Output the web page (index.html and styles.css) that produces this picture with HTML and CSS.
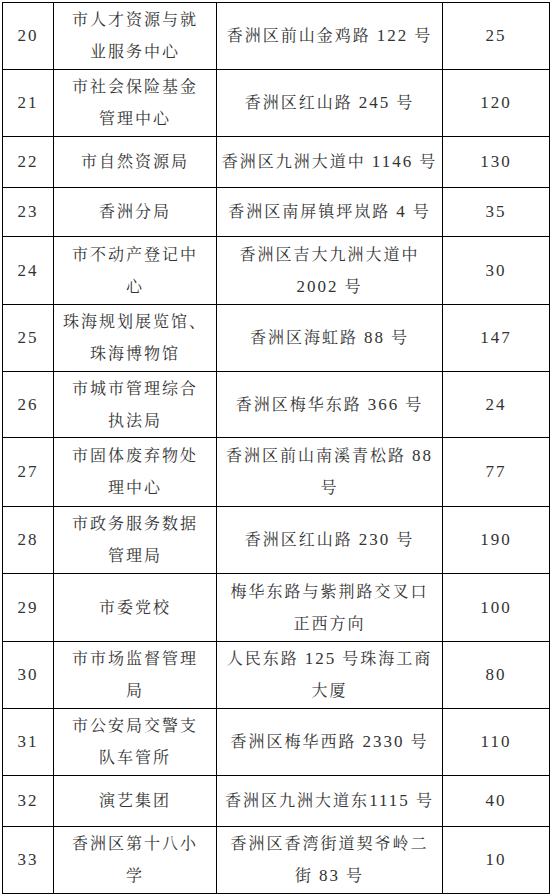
FILE: index.html
```html
<!DOCTYPE html>
<html lang="zh-CN">
<head>
<meta charset="utf-8">
<link rel="stylesheet" href="styles.css">
</head>
<body class="page">
<table class="grid">
  <colgroup>
    <col class="c-no">
    <col class="c-name">
    <col class="c-addr">
    <col class="c-num">
  </colgroup>
  <tbody>
    <tr class="tall"><td class="num">20</td><td class="txt">市人才资源与就<br>业服务中心</td><td class="txt">香洲区前山金鸡路 <span class="n">122</span> 号</td><td class="num">25</td></tr>
    <tr class="tall"><td class="num">21</td><td class="txt">市社会保险基金<br>管理中心</td><td class="txt">香洲区红山路 <span class="n">245</span> 号</td><td class="num">120</td></tr>
    <tr class="short"><td class="num">22</td><td class="txt">市自然资源局</td><td class="txt">香洲区九洲大道中 <span class="n">1146</span> 号</td><td class="num">130</td></tr>
    <tr class="short2"><td class="num">23</td><td class="txt">香洲分局</td><td class="txt">香洲区南屏镇坪岚路 <span class="n">4</span> 号</td><td class="num">35</td></tr>
    <tr class="tall2"><td class="num">24</td><td class="txt">市不动产登记中<br>心</td><td class="txt">香洲区吉大九洲大道中<br><span class="n">2002</span> 号</td><td class="num">30</td></tr>
    <tr class="tall"><td class="num">25</td><td class="txt">珠海规划展览馆、<br>珠海博物馆</td><td class="txt">香洲区海虹路 <span class="n">88</span> 号</td><td class="num">147</td></tr>
    <tr class="tall3"><td class="num">26</td><td class="txt">市城市管理综合<br>执法局</td><td class="txt">香洲区梅华东路 <span class="n">366</span> 号</td><td class="num">24</td></tr>
    <tr class="tall4"><td class="num">27</td><td class="txt">市固体废弃物处<br>理中心</td><td class="txt">香洲区前山南溪青松路 <span class="n">88</span><br>号</td><td class="num">77</td></tr>
    <tr class="tall"><td class="num">28</td><td class="txt">市政务服务数据<br>管理局</td><td class="txt">香洲区红山路 <span class="n">230</span> 号</td><td class="num">190</td></tr>
    <tr class="tall2"><td class="num">29</td><td class="txt">市委党校</td><td class="txt">梅华东路与紫荆路交叉口<br>正西方向</td><td class="num">100</td></tr>
    <tr class="tall"><td class="num">30</td><td class="txt">市市场监督管理<br>局</td><td class="txt">人民东路 <span class="n">125</span> 号珠海工商<br>大厦</td><td class="num">80</td></tr>
    <tr class="tall"><td class="num">31</td><td class="txt">市公安局交警支<br>队车管所</td><td class="txt">香洲区梅华西路 <span class="n">2330</span> 号</td><td class="num">110</td></tr>
    <tr class="short"><td class="num">32</td><td class="txt">演艺集团</td><td class="txt">香洲区九洲大道东<span class="n">1115</span> 号</td><td class="num">40</td></tr>
    <tr class="tall"><td class="num">33</td><td class="txt">香洲区第十八小<br>学</td><td class="txt">香洲区香湾街道契爷岭二<br>街 <span class="n">83</span> 号</td><td class="num">10</td></tr>
  </tbody>
</table>
</body>
</html>
```

FILE: styles.css
```css
html, body {
  margin: 0;
  padding: 0;
  background: #ffffff;
}

.page {
  padding: 2px 0 0 2px;
  font-family: "Liberation Serif", "Noto Serif CJK SC", serif;
}

.grid {
  border-collapse: collapse;
  table-layout: fixed;
  width: 547px;
  font-family: "Liberation Serif", "Noto Serif CJK SC", serif;
  font-size: 16px;
  color: #333333;
}

.c-no { width: 51px; }
.c-name { width: 163px; }
.c-addr { width: 226px; }
.c-num { width: 107px; }

.grid td {
  border: 1px solid #000;
  padding: 0;
  text-align: center;
  vertical-align: middle;
  line-height: 32px;
  letter-spacing: 2px;
  white-space: nowrap;
}

.grid .txt {
  font-family: "Liberation Serif", "Noto Serif CJK SC", serif;
  font-size: 16px;
}

.grid .num,
.grid .n {
  font-family: "Liberation Serif", serif;
  font-size: 17px;
}

.tall { height: 67px; }
.tall2 { height: 68px; }
.tall3 { height: 66px; }
.tall4 { height: 69px; }
.short { height: 51px; }
.short2 { height: 49px; }
```
